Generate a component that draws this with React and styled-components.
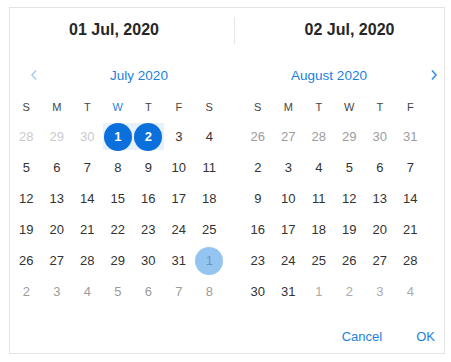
import styled, { createGlobalStyle, css } from "styled-components";

const GlobalStyle = createGlobalStyle`
  body {
    margin: 0;
    background: #ffffff;
    font-family: "Liberation Sans", Arial, sans-serif;
  }
`;

const WEEKDAYS = ["S", "M", "T", "W", "T", "F", "S"];

/* 6 weeks of cells for a month, with the spill-over days marked */
function buildMonth(year, month) {
  const first = new Date(year, month, 1).getDay();
  const daysIn = new Date(year, month + 1, 0).getDate();
  const prevDays = new Date(year, month, 0).getDate();
  const cells = [];
  for (let i = first - 1; i >= 0; i--) cells.push({ day: prevDays - i, out: "prev" });
  for (let d = 1; d <= daysIn; d++) cells.push({ day: d, out: null });
  let n = 1;
  while (cells.length < 42) cells.push({ day: n++, out: "next" });
  return cells;
}

function App() {
  const july = buildMonth(2020, 6);
  // the second month is cut off by the popup edge: its Saturday column isn't visible
  const august = buildMonth(2020, 7).filter((_, i) => i % 7 !== 6);

  return (
    <>
      <GlobalStyle />
      <Page>
        <Picker>
          <Header>
            <DateLabel $side="left">01 Jul, 2020</DateLabel>
            <Divider />
            <DateLabel $side="right">02 Jul, 2020</DateLabel>
          </Header>

          <MonthBar>
            <Arrow $dim>
              <svg width="8" height="12" viewBox="0 0 8 12">
                <polyline points="6,1.5 2,6 6,10.5" fill="none" stroke="currentColor" strokeWidth="1.6" />
              </svg>
            </Arrow>
            <MonthTitle>July 2020</MonthTitle>
            <MonthTitle>August 2020</MonthTitle>
            <Arrow>
              <svg width="8" height="12" viewBox="0 0 8 12">
                <polyline points="2,1.5 6,6 2,10.5" fill="none" stroke="currentColor" strokeWidth="1.6" />
              </svg>
            </Arrow>
          </MonthBar>

          <Panels>
            <Month $cols={7}>
              {WEEKDAYS.map((w, i) => (
                <Weekday key={i} $today={i === 3}>
                  {w}
                </Weekday>
              ))}
              {july.map((c, i) => {
                const selected = !c.out && (c.day === 1 || c.day === 2);
                const hovered = c.out === "next" && c.day === 1;
                return (
                  <Cell key={i} $inRange={selected}>
                    <Day
                      $tone={c.out === "prev" ? "disabled" : c.out ? "muted" : "normal"}
                      $selected={selected}
                      $hovered={hovered}
                    >
                      {c.day}
                    </Day>
                  </Cell>
                );
              })}
            </Month>
            <Month $cols={6}>
              {WEEKDAYS.slice(0, 6).map((w, i) => (
                <Weekday key={i}>{w}</Weekday>
              ))}
              {august.map((c, i) => (
                <Cell key={i}>
                  <Day $tone={c.out === "prev" ? "muted" : c.out ? "faint" : "normal"}>{c.day}</Day>
                </Cell>
              ))}
            </Month>
          </Panels>

          <Footer>
            <TextButton>Cancel</TextButton>
            <TextButton>OK</TextButton>
          </Footer>
        </Picker>
      </Page>
    </>
  );
}

const Page = styled.div`
  padding: 7px 0 0 9px;
`;

const Picker = styled.div`
  width: 434px;
  height: 345px;
  border: 1px solid #e3e3e3;
  background: #fff;
  overflow: hidden;
  display: flex;
  flex-direction: column;
`;

const Header = styled.div`
  display: flex;
  align-items: center;
  height: 44px;
`;

const DateLabel = styled.div`
  font-size: 16px;
  font-weight: bold;
  color: #262626;
  text-align: center;
  ${(p) =>
    p.$side === "left"
      ? css`
          width: 224px;
          padding-right: 16px;
          box-sizing: border-box;
        `
      : css`
          flex: 1;
          padding-left: 20px;
        `}
`;

const Divider = styled.div`
  width: 1px;
  height: 27px;
  background: #e6e6e6;
`;

const MonthBar = styled.div`
  display: flex;
  align-items: center;
  height: 30px;
  margin-top: 8px;
`;

const Arrow = styled.div`
  width: 20px;
  height: 20px;
  display: flex;
  align-items: center;
  justify-content: center;
  color: ${(p) => (p.$dim ? "#a7cdf4" : "#3b92e6")};
  margin-left: ${(p) => (p.$dim ? "14px" : "0")};
`;

const MonthTitle = styled.div`
  flex: 1;
  text-align: center;
  font-size: 13.5px;
  color: #1b7fdf;
`;

const Panels = styled.div`
  display: flex;
  gap: 18px;
  padding-left: 1px;
  margin-top: 2px;
`;

const Month = styled.div`
  display: grid;
  grid-template-columns: repeat(${(p) => p.$cols}, 30.5px);
  grid-template-rows: 29px repeat(6, 31px);
`;

const Weekday = styled.div`
  display: flex;
  align-items: center;
  justify-content: center;
  font-size: 11px;
  color: ${(p) => (p.$today ? "#2a83e0" : "#444")};
`;

const Cell = styled.div`
  position: relative;
  display: flex;
  align-items: center;
  justify-content: center;
  ${(p) =>
    p.$inRange &&
    css`
      &::before {
        content: "";
        position: absolute;
        left: 0;
        right: 0;
        top: 2px;
        height: 27px;
        background: #e7f1fc;
      }
    `}
`;

const toneColor = {
  normal: "#333333",
  disabled: "#cbcbcb",
  muted: "#9c9c9c",
  faint: "#ababab",
};

const Day = styled.div`
  position: relative;
  width: 28px;
  height: 28px;
  border-radius: 50%;
  display: flex;
  align-items: center;
  justify-content: center;
  font-size: 13px;
  color: ${(p) => toneColor[p.$tone]};
  ${(p) =>
    p.$selected &&
    css`
      background: #0b6fdc;
      color: #fff;
      font-weight: bold;
    `}
  ${(p) =>
    p.$hovered &&
    css`
      background: #94c5f1;
      color: #6f93bb;
    `}
`;

const Footer = styled.div`
  display: flex;
  justify-content: flex-end;
  align-items: center;
  gap: 16px;
  height: 32px;
  margin-top: auto;
  margin-bottom: 1px;
`;

const TextButton = styled.div`
  font-size: 13px;
  color: #1b7fdf;
  padding: 0 9px;
`;

export default App;
